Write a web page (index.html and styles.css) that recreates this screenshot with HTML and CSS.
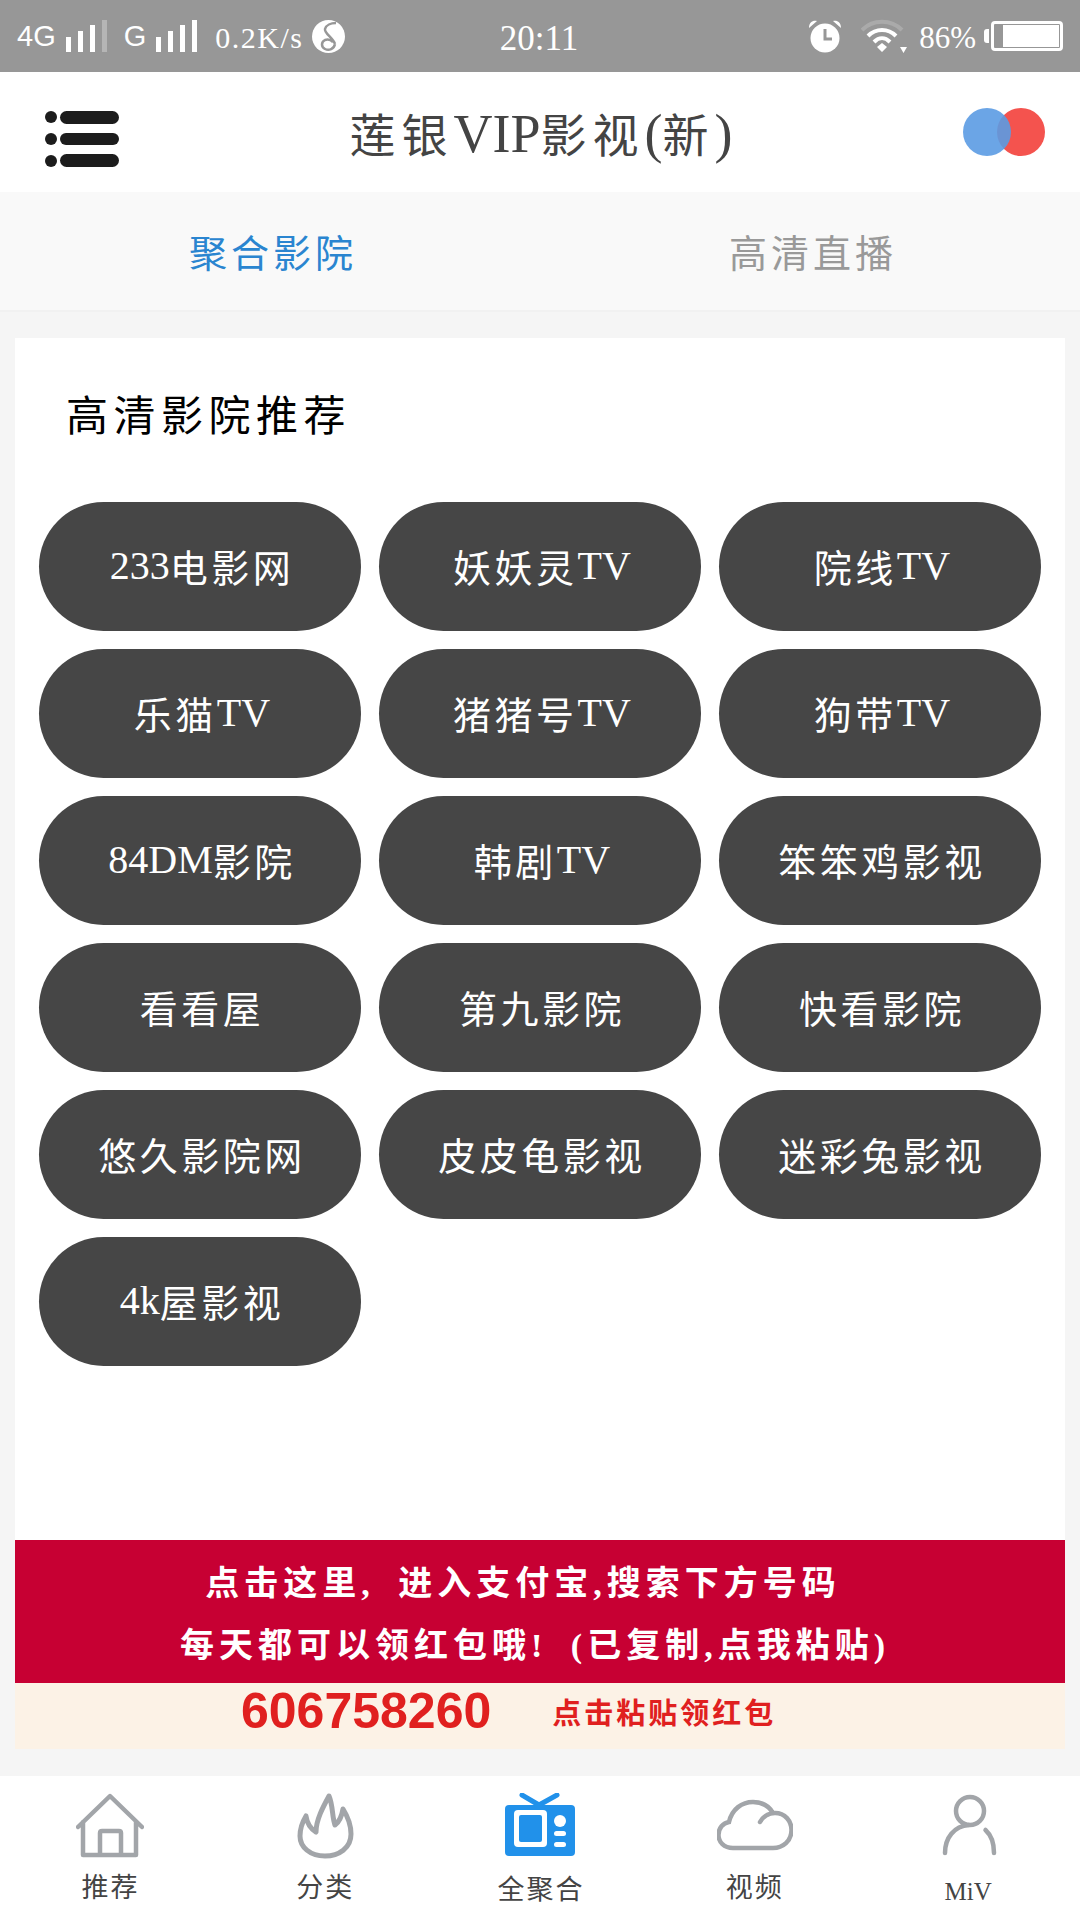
FILE: index.html
```html
<!DOCTYPE html>
<html lang="zh-CN">
<head>
	<meta charset="UTF-8">
	<title>莲银VIP影视</title>
	<link rel="stylesheet" href="styles.css">
</head>
<body>
	<div class="status">
		<div class="status-left">
			<span class="net">4G</span>
			<svg class="bars" width="41" height="32" viewBox="0 0 41 32"><rect x="0" y="17" width="5" height="15" fill="#fff"/><rect x="12" y="11" width="5" height="21" fill="#fff"/><rect x="24" y="5" width="5" height="27" fill="#fff"/><rect x="36" y="0" width="5" height="32" fill="#b5b5b5"/></svg>
			<span class="net net-g">G</span>
			<svg class="bars" width="41" height="32" viewBox="0 0 41 32"><rect x="0" y="17" width="5" height="15" fill="#fff"/><rect x="12" y="11" width="5" height="21" fill="#fff"/><rect x="24" y="5" width="5" height="27" fill="#fff"/><rect x="36" y="0" width="5" height="32" fill="#fff"/></svg>
			<span class="speed">0.2K/s</span>
			<svg width="33" height="33" viewBox="0 0 33 33"><circle cx="16.500" cy="16.500" r="16.500" fill="#fff"/><path d="M24 3 C19 3 14 5 13 9 C12 13 21 18 23 24 M23 24 C22 29 17 31 13 29 C9 27 9 22 13 20 C16 19 19 20 21 22" fill="none" stroke="#979797" stroke-width="2.500"/></svg>
		</div>
		<div class="time">20:11</div>
		<div class="status-right">
			<svg width="36" height="34" viewBox="0 0 36 34"><circle cx="18" cy="19" r="14.500" fill="#fff"/><path d="M2 9 C2 3 6 1 10 2 Z M34 9 C34 3 30 1 26 2 Z" fill="#fff"/><path d="M18 10 V20 H25" fill="none" stroke="#979797" stroke-width="3"/></svg>
			<svg class="wifi" width="46" height="34" viewBox="0 0 46 34"><path d="M1 11 C12 0 30 0 41 11" fill="none" stroke="#aaa" stroke-width="4"/><path d="M7 17 C15 9 27 9 35 17 M13 23 C18 18 24 18 29 23" fill="none" stroke="#fff" stroke-width="4"/><path d="M16 28 L21 24 L26 28 L21 33 Z M39 28 H46 L42.500 34 Z" fill="#fff"/></svg>
			<span class="pct">86%</span>
			<div class="battery-cap"></div>
			<div class="battery"><div class="battery-fill"></div></div>
		</div>
	</div>

	<div class="header">
		<svg class="menu" width="74" height="56" viewBox="0 0 74 56"><g fill="#1c1c1c"><circle cx="6" cy="6" r="6"/><circle cx="6" cy="28" r="6"/><circle cx="6" cy="50" r="6"/><rect x="15" y="0" width="59" height="13" rx="6.500"/><rect x="15" y="22" width="59" height="12" rx="6"/><rect x="15" y="43" width="59" height="13" rx="6.500"/></g></svg>
		<h1 class="title">莲银<span class="lat">VIP</span>影视<span class="lat">(</span>新<span class="lat">)</span></h1>
		<svg width="82" height="50" viewBox="0 0 82 50"><circle cx="58" cy="25" r="24" fill="#f4534e"/><circle cx="24" cy="25" r="24" fill="#5b9be3" opacity="0.9"/></svg>
	</div>

	<div class="tabs">
		<div class="tab tab-on">聚合影院</div>
		<div class="tab">高清直播</div>
	</div>

	<div class="main">
		<div class="card">
			<h2 class="card-title">高清影院推荐</h2>
			<div class="grid">
				<a class="pill"><span class="lat">233</span>电影网</a>
				<a class="pill">妖妖灵<span class="lat">TV</span></a>
				<a class="pill">院线<span class="lat">TV</span></a>
				<a class="pill">乐猫<span class="lat">TV</span></a>
				<a class="pill">猪猪号<span class="lat">TV</span></a>
				<a class="pill">狗带<span class="lat">TV</span></a>
				<a class="pill"><span class="lat">84DM</span>影院</a>
				<a class="pill">韩剧<span class="lat">TV</span></a>
				<a class="pill">笨笨鸡影视</a>
				<a class="pill">看看屋</a>
				<a class="pill">第九影院</a>
				<a class="pill">快看影院</a>
				<a class="pill">悠久影院网</a>
				<a class="pill">皮皮龟影视</a>
				<a class="pill">迷彩兔影视</a>
				<a class="pill"><span class="lat">4k</span>屋影视</a>
			</div>
			<div class="promo">
				<p class="promo-first">点击这里, 进入支付宝,搜索下方号码</p>
				<p>每天都可以领红包哦! (已复制,点我粘贴)</p>
			</div>
			<div class="code">
				<span class="code-num">606758260</span>
				<span class="code-tip">点击粘贴领红包</span>
			</div>
		</div>
	</div>

	<div class="nav">
		<div class="nav-item">
			<svg width="68" height="66" viewBox="0 0 68 66"><path d="M2 34 L34 3 L66 34 M7 29 V62 H60 V29 M24 62 V40 Q24 38 26 38 H43 Q45 38 45 40 V62" fill="none" stroke="#a2a5a9" stroke-width="4.500" stroke-linejoin="round" stroke-linecap="round"/></svg>
			<span>推荐</span>
		</div>
		<div class="nav-item">
			<svg width="58" height="66" viewBox="0 0 58 66"><path d="M33 3 C37 12 36 24 39 32 C43 29 46 22 47 16 C52 24 55 33 55 41 C55 55 43 63 29 63 C14 63 4 54 4 43 C4 35 7 28 10 23 C11 30 15 36 20 39 C20 27 27 14 33 3 Z" fill="none" stroke="#a2a5a9" stroke-width="5" stroke-linejoin="round"/></svg>
			<span>分类</span>
		</div>
		<div class="nav-item nav-tv">
			<svg width="70" height="66" viewBox="0 0 70 66"><path d="M17 2 L34 12 L52 2" fill="none" stroke="#2191ea" stroke-width="5" stroke-linecap="round"/><rect x="0" y="12" width="70" height="51" rx="4" fill="#2191ea"/><rect x="9" y="17" width="33" height="37" rx="4" fill="#fff"/><rect x="14" y="22" width="23" height="27" rx="2" fill="#2191ea"/><circle cx="55" cy="28" r="6" fill="#fff"/><rect x="49" y="38" width="12" height="5" rx="2.500" fill="#fff"/><rect x="49" y="49" width="12" height="5" rx="2.500" fill="#fff"/></svg>
			<span>全聚合</span>
		</div>
		<div class="nav-item">
			<svg width="76" height="66" viewBox="0 -7 76 66"><path d="M43 22 C47 15 54 13 58 13 C68 13 74.500 21 74.500 30 C74.500 41 66 48 56 48 H16 C7 48 1.500 42 1.500 35 C1.500 28 6 23 12 22 C15 9 25 2 36 2 C45 2 52 6 56 13" fill="none" stroke="#a2a5a9" stroke-width="4.500" stroke-linecap="round"/></svg>
			<span>视频</span>
		</div>
		<div class="nav-item nav-mv">
			<svg width="56" height="66" viewBox="0 0 56 66"><circle cx="28" cy="18" r="14" fill="none" stroke="#a2a5a9" stroke-width="4.500"/><path d="M3 60 C3 45 12 33 27 32 M43.500 37 C49 42 52 50 52 60" fill="none" stroke="#a2a5a9" stroke-width="4.500" stroke-linecap="round"/></svg>
			<span>MiV</span>
		</div>
	</div>
</body>
</html>
```

FILE: styles.css
```css
*{padding: 0;margin: 0;box-sizing: border-box;}
body{
	width: 1080px;
	height: 1920px;
	display: flex;
	flex-direction: column;
	background: #f5f5f5;
	font-family: "Liberation Serif", "Noto Sans CJK SC", serif;
	overflow: hidden;
}
.lat{letter-spacing: 0;}
.status{
	height: 72px;
	padding: 0 17px;
	background: #979797;
	color: #fff;
	display: grid;
	grid-template-columns: 1fr auto 1fr;
	align-items: center;
}
.status-left,.status-right{
	display: flex;
	align-items: center;
}
.status-right{justify-content: flex-end;}
.net{
	font: 29px "Liberation Sans", sans-serif;
	margin-right: 10px;
}
.net-g{margin-left: 17px;}
.speed{
	font-size: 30px;
	margin: 4px 9px 0 18px;
	letter-spacing: 1.5px;
}
.time{
	font-size: 35px;
	margin: 6px 2px 0 0;
}
.wifi{margin-left: 18px;}
.pct{
	font-size: 31px;
	margin: 4px 8px 0 12px;
}
.battery-cap{
	width: 5px;
	height: 14px;
	background: #fff;
	border-radius: 3px 0 0 3px;
	margin-right: 2px;
}
.battery{
	width: 72px;
	height: 30px;
	border: 3px solid #fff;
	border-radius: 4px;
	padding: 1px 1px 1px 9px;
}
.battery-fill{
	width: 100%;
	height: 100%;
	background: #fff;
}
.header{
	height: 120px;
	padding: 0 35px 0 45px;
	background: #fff;
	display: flex;
	align-items: center;
	justify-content: space-between;
}
.menu{margin-top: 14px;}
.title{
	font-size: 46px;
	font-weight: normal;
	color: #444;
	letter-spacing: 6px;
}
.title .lat{font-size: 54px;}
.tabs{
	height: 120px;
	background: #f9f9f9;
	border-bottom: 2px solid #f1f1f1;
	display: flex;
}
.tab{
	flex: 1;
	text-align: center;
	line-height: 118px;
	padding: 3px 0 0 6px;
	font-size: 38px;
	letter-spacing: 4px;
	color: #999;
}
.tab-on{color: #2a85d0;}
.main{
	flex: 1;
	padding: 26px 15px 27px;
	display: flex;
}
.card{
	flex: 1;
	background: #fff;
	display: flex;
	flex-direction: column;
}
.card-title{
	height: 164px;
	padding: 52px 0 0 51px;
	font-size: 42px;
	line-height: 54px;
	font-weight: normal;
	color: #000;
	letter-spacing: 5.5px;
}
.grid{
	padding: 0 24px;
	display: grid;
	grid-template-columns: repeat(3, 1fr);
	grid-auto-rows: 129px;
	gap: 18px;
}
.pill{
	background: #464646;
	border-radius: 65px;
	color: #fff;
	font-size: 38px;
	letter-spacing: 3.5px;
	padding: 0 0 3px 4px;
	display: flex;
	align-items: center;
	justify-content: center;
}
.pill .lat{font-size: 40px;}
.promo{
	margin-top: auto;
	height: 143px;
	background: #c70033;
	color: #fff;
	font-size: 34px;
	font-weight: bold;
	letter-spacing: 5px;
	word-spacing: 10px;
	text-align: center;
	padding-top: 13px;
}
.promo p{
	line-height: 62px;
	padding-right: 10px;
}
.promo .promo-first{padding-right: 34px;}
.code{
	height: 66px;
	background: #fcf2e6;
	color: #e0201f;
	padding: 0 0 10px 226px;
	display: flex;
	align-items: center;
}
.code-num{font: bold 50px "Liberation Sans", sans-serif;}
.code-tip{
	font-size: 29px;
	font-weight: bold;
	letter-spacing: 3px;
	margin-left: 61px;
}
.nav{
	height: 144px;
	background: #fff;
	display: flex;
	padding: 17px 3px 0;
}
.nav-item{
	flex: 1;
	display: flex;
	flex-direction: column;
	align-items: center;
	color: #444;
	font-size: 27px;
}
.nav-item svg{flex: none;}
.nav-item span{
	margin-top: 12px;
	line-height: 34px;
	letter-spacing: 2px;
}
.nav-tv span{margin: 14px 0 0 2px;}
.nav-mv span{
	margin: 16px 0 0 -3px;
	font-size: 25px;
	letter-spacing: 0;
}
```
